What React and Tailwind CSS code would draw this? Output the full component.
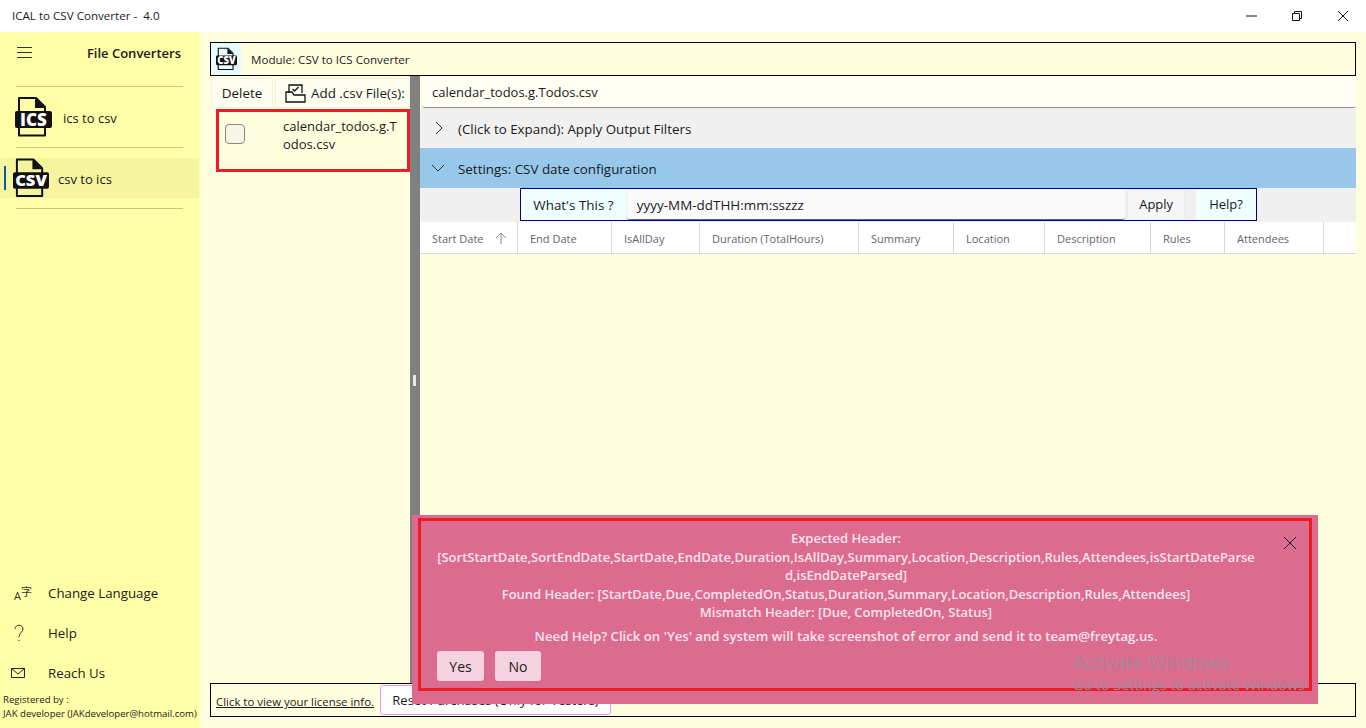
const columns = [
  { label: 'Start Date', width: 'w-[98px]', sorted: true },
  { label: 'End Date', width: 'w-[94px]' },
  { label: 'IsAllDay', width: 'w-[88px]' },
  { label: 'Duration (TotalHours)', width: 'w-[159px]' },
  { label: 'Summary', width: 'w-[95px]' },
  { label: 'Location', width: 'w-[91px]' },
  { label: 'Description', width: 'w-[106px]' },
  { label: 'Rules', width: 'w-[74px]' },
  { label: 'Attendees', width: 'w-[99px]' },
];

function FileBadge({ label, className }) {
  return (
    <svg viewBox="0 0 37 40" className={className}>
      <path d="M4 1h17l9 9v28.500H4z" fill="none" stroke="#111" strokeWidth="2" strokeLinejoin="round" />
      <path d="M20 1v10h10z" fill="#111" />
      <rect x="0" y="14" width="37" height="17" rx="2" fill="#111" />
      <text x="18.500" y="28.500" textAnchor="middle" fill="#fff" fontSize="17" fontWeight="800" fontFamily="'Open Sans', sans-serif">
        {label}
      </text>
    </svg>
  );
}

function WindowControls() {
  return (
    <div className="flex items-center">
      <svg viewBox="0 0 12 12" className="w-[12px] h-[12px] mr-[33px]"><path d="M0 6h11" stroke="#111" fill="none" /></svg>
      <svg viewBox="0 0 12 12" className="w-[12px] h-[12px] mr-[34px]"><path d="M1.500 3.500h7v7h-7zM3.500 3.500v-2h7v7h-2" stroke="#111" fill="none" /></svg>
      <svg viewBox="0 0 12 12" className="w-[12px] h-[12px] mr-[17px]"><path d="M1 1l10 10M11 1L1 11" stroke="#111" fill="none" /></svg>
    </div>
  );
}

function Sidebar() {
  return (
    <aside className="w-[200px] shrink-0 bg-[#ffffa8] flex flex-col text-[#1a1a1a]">
      <div className="h-[54px] flex items-start pt-[11px] pl-[17px] pr-[19px] justify-between">
        <svg viewBox="0 0 15 11" className="w-[15px] h-[11px] mt-[4px]"><path d="M0 .5h15M0 5.500h15M0 10.500h15" stroke="#333" fill="none" /></svg>
        <span className="text-[13px] font-semibold leading-[20px]">File Converters</span>
      </div>
      <div className="ml-[16px] mr-[17px] h-px bg-[#c8c88a]" />
      <div className="h-[60px] flex items-center pl-[15px] gap-[11px] text-[13px]">
        <FileBadge label="ICS" className="w-[37px] h-[40px]" />
        <span className="pt-[3px]">ics to csv</span>
      </div>
      <div className="ml-[16px] mr-[17px] h-px bg-[#c8c88a]" />
      <div className="mt-[10px] relative h-[40px] w-[199px] bg-[#f5f5a0] flex items-center pl-[13px] gap-[9px] text-[13px]">
        <span className="absolute left-[4px] top-[8px] w-[2px] h-[24px] bg-[#0a5ca8]" />
        <FileBadge label="CSV" className="w-[36px] h-[40px]" />
        <span className="pt-[3px]">csv to ics</span>
      </div>
      <div className="mt-[10px] ml-[16px] mr-[17px] h-px bg-[#c8c88a]" />
      <div className="mt-auto flex flex-col text-[13.300px]">
        <div className="h-[40px] flex items-center pl-[14px]">
          <span className="w-[34px] flex items-end text-[#333] leading-none">
            <span className="text-[11px]">A</span>
            <span className="text-[11px] mb-[4px] font-['Noto_Sans_CJK_SC',sans-serif]">字</span>
          </span>
          <span className="pt-[1px]">Change Language</span>
        </div>
        <div className="h-[40px] flex items-center pl-[13px]">
          <svg viewBox="0 0 12 18" className="w-[12px] h-[18px] mr-[23px]"><path d="M2 5c0-5 8-5 8 0 0 3-4 4-4 8M6 16v1" stroke="#333" fill="none" /></svg>
          <span className="pt-[1px]">Help</span>
        </div>
        <div className="h-[40px] flex items-center pl-[11px]">
          <svg viewBox="0 0 14 10" className="w-[14px] h-[10px] mr-[23px]"><path d="M.5.5h13v9H.5zM.5.5L7 6l6.500-5.500" stroke="#222" fill="none" /></svg>
          <span className="pt-[1px]">Reach Us</span>
        </div>
      </div>
      <div className="pl-[3px] pb-[7px] text-[9.600px] leading-[14px] text-[#222] whitespace-nowrap">
        <div>Registered by :</div>
        <div>JAK developer (JAKdeveloper@hotmail.com)</div>
      </div>
    </aside>
  );
}

function FileList() {
  return (
    <div className="w-[200px] shrink-0 flex flex-col">
      <div className="h-[32px] flex pt-[2px] pl-px gap-[2px] text-[13.400px] text-[#1a1a1a]">
        <button className="w-[62px] h-[30px] bg-[#fefef0] rounded-[3px] border border-[#f2f2dc] pt-[1px]">Delete</button>
        <button className="w-[135px] h-[30px] bg-[#fefef0] rounded-[3px] border border-[#f2f2dc] flex items-center pl-[9px] gap-[5px] whitespace-nowrap">
          <svg viewBox="0 0 21 19" className="w-[21px] h-[19px]">
            <path d="M4 9V1h13v8M1 8h6l2 3h11v7H1z" fill="none" stroke="#111" strokeWidth="1.300" />
            <path d="M7.500 5l2 2 4-4" fill="none" stroke="#111" strokeWidth="1.300" />
          </svg>
          Add .csv File(s):
        </button>
      </div>
      <div className="ml-[6px] mt-px h-[63px] border-[3px] border-[#ed1c24] flex text-[13px] text-[#1a1a1a]">
        <span className="ml-[6px] mt-[12px] w-[20px] h-[20px] rounded-[4px] border border-[#8a8a78] bg-[#f6f6e6] shrink-0" />
        <span className="ml-[38px] mt-[5px] w-[118px] break-all leading-[18px]">calendar_todos.g.Todos.csv</span>
      </div>
    </div>
  );
}

function ConfigRow() {
  return (
    <div className="h-[34px] bg-[#f0f0f0] pl-[100px]">
      <div className="w-[737px] h-[33px] border border-[#00008b] flex text-[13px] text-[#1a1a1a]">
        <button className="w-[105px] bg-[#f0ffff] rounded-[3px] text-[13.400px] pt-[1px]">What's This ?</button>
        <div className="ml-px w-[499px] bg-[#fafafa] border-b border-[#666] rounded-[3px] pl-[10px] pt-[2px] flex items-center text-[13.450px]">yyyy-MM-ddTHH:mm:sszzz</div>
        <button className="ml-[2px] w-[58px] bg-[#f6f6f6] rounded-[3px] border border-[#ececec] pt-[1px]">Apply</button>
        <button className="ml-[11px] w-[60px] bg-[#f0ffff] rounded-[3px] pt-[1px]">Help?</button>
      </div>
    </div>
  );
}

function ErrorToast() {
  return (
    <div className="absolute left-[412px] top-[515px] w-[906px] h-[189px] bg-[#db6b8f] pt-[3px] px-[6px]">
      <div className="relative h-[173px] border-[3px] border-[#ed1c24] text-[#fbe4ec] text-[13px] font-semibold text-center">
        <svg viewBox="0 0 12 12" className="absolute right-[13px] top-[16px] w-[12px] h-[12px]"><path d="M0 0l12 12M12 0L0 12" stroke="#222" fill="none" /></svg>
        <div className="w-[820px] ml-[15px] pt-[8px] leading-[18.500px] break-all">
          <div>Expected Header:</div>
          <div>[SortStartDate,SortEndDate,StartDate,EndDate,Duration,IsAllDay,Summary,Location,Description,Rules,Attendees,isStartDateParsed,isEndDateParsed]</div>
          <div>Found Header: [StartDate,Due,CompletedOn,Status,Duration,Summary,Location,Description,Rules,Attendees]</div>
          <div>Mismatch Header: [Due, CompletedOn, Status]</div>
          <div className="mt-[5px] text-[13.200px]">Need Help? Click on 'Yes' and system will take screenshot of error and send it to team@freytag.us.</div>
        </div>
        <div className="absolute left-[16px] top-[130px] flex gap-[11px] text-[#1a1a1a] font-normal text-[14px]">
          <button className="w-[47px] h-[30px] bg-[#f4d2df] rounded-[3px] pt-[1px]">Yes</button>
          <button className="w-[46px] h-[30px] bg-[#f4d2df] rounded-[3px] pt-[1px]">No</button>
        </div>
      </div>
    </div>
  );
}

export default function App() {
  return (
    <div className="relative w-[1366px] h-[728px] overflow-hidden bg-white flex flex-col font-['Open_Sans',sans-serif]">
      <header className="h-[32px] shrink-0 flex items-center justify-between pl-[12px] text-[11.600px] text-[#1a1a1a]">
        <span className="whitespace-pre">ICAL to CSV Converter -  4.0</span>
        <WindowControls />
      </header>

      <div className="flex-1 flex min-h-0">
        <Sidebar />

        <main className="flex-1 min-w-0 bg-[#ffffe0] pl-[10px] pr-[10px] pt-[10px] pb-[11px] flex flex-col">
          <div className="h-[34px] shrink-0 border border-black flex items-center text-[11.600px] text-[#1a1a1a]">
            <div className="w-[30px] h-full bg-[#e8fbff] flex items-center justify-center">
              <FileBadge label="CSV" className="w-[21px] h-[24px]" />
            </div>
            <span className="ml-[10px] pt-[2px]">Module: CSV to ICS Converter</span>
          </div>

          <div className="flex-1 flex min-h-0">
            <FileList />

            <div className="relative w-[10px] shrink-0 bg-[#808080]">
              <span className="absolute left-[3px] top-[299px] w-[3px] h-[11px] bg-[#e8e8e8]" />
            </div>

            <div className="flex-1 min-w-0 flex flex-col text-[13px] text-[#1a1a1a]">
              <div className="ml-[2px] mt-px h-[31px] bg-[#fffff5] border-b border-[#8a8a78] rounded-[3px] pl-[10px] pt-[1px] flex items-center">
                calendar_todos.g.Todos.csv
              </div>
              <div className="h-[40px] bg-[#f0f0f0] flex items-center">
                <svg viewBox="0 0 8 12" className="ml-[15px] w-[8px] h-[12px]"><path d="M1 0l6 6-6 6" stroke="#333" fill="none" /></svg>
                <span className="ml-[15px] pt-[3px] text-[13.350px]">(Click to Expand): Apply Output Filters</span>
              </div>
              <div className="h-[40px] bg-[#97c8eb] flex items-center">
                <svg viewBox="0 0 12 8" className="ml-[12px] w-[12px] h-[8px]"><path d="M0 1l6 6 6-6" stroke="#333" fill="none" /></svg>
                <span className="ml-[14px] pt-[3px] text-[13.400px]">Settings: CSV date configuration</span>
              </div>
              <ConfigRow />
              <div className="h-[32px] bg-white border-b border-[#d8d8d8] flex text-[11px] text-[#666]">
                {columns.map((col) => (
                  <div key={col.label} className={`${col.width} h-full border-r border-[#d8d8d8] flex items-center pl-[12px] pt-[3px] whitespace-nowrap`}>
                    {col.label}
                    {col.sorted && (
                      <svg viewBox="0 0 12 12" className="ml-[11px] mb-[3px] w-[12px] h-[12px]"><path d="M6 12V1M1 6l5-5 5 5" stroke="#888" fill="none" /></svg>
                    )}
                  </div>
                ))}
              </div>
            </div>
          </div>

          <div className="h-[34px] shrink-0 border border-black flex items-center text-[11.400px] text-[#1a1a1a]">
            <span className="ml-[5px] pt-[4px] underline whitespace-nowrap">Click to view your license info.</span>
            <button className="ml-[6px] w-[231px] h-[30px] bg-white border border-[#f090f0] rounded-[3px] text-[13px] pt-[2px]">Reset Purchases (Only for Testers)</button>
          </div>
        </main>
      </div>

      <ErrorToast />

      <div className="absolute left-[1073px] top-[649px] text-[#a58795] whitespace-nowrap pointer-events-none">
        <div className="text-[19px] leading-[26px]">Activate Windows</div>
        <div className="text-[14.400px] leading-[20px]">Go to Settings to activate Windows</div>
      </div>
    </div>
  );
}
